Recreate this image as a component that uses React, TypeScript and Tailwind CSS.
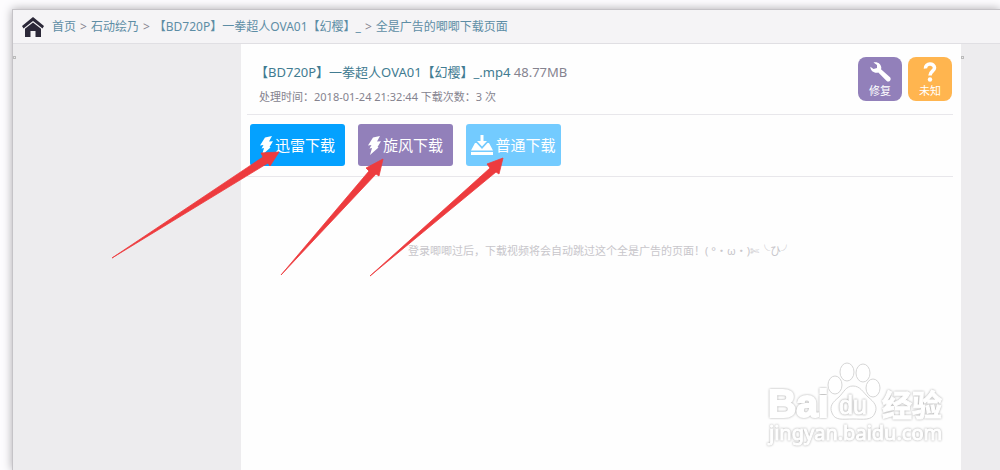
import React from "react";

const crumbs = ["首页", "石动绘乃", "【BD720P】一拳超人OVA01【幻樱】_", "全是广告的唧唧下载页面"];

function HomeIcon() {
  return (
    <svg viewBox="0 0 22 20" className="h-5 w-[22px]" fill="#2b2838" aria-hidden="true">
      <path d="M11 0 0 9l1.500 2.400L11 4l9.500 7.400L22 9z" />
      <path d="M11 5.500 3 11.700V20h5.500v-6h5v6H19v-8.300z" />
    </svg>
  );
}

function BoltIcon() {
  return (
    <svg viewBox="0 0 13 19" className="h-[19px] w-[13px]" fill="currentColor" aria-hidden="true">
      <path d="M5 1.500 12 0 9 5.500 13 5.200 9.500 11 10.500 11.500 2 19 4 12 1.500 12.500 3.500 9 0 9.500z" />
    </svg>
  );
}

function TrayIcon() {
  return (
    <svg viewBox="0 0 22 20" className="h-5 w-[22px]" fill="currentColor" aria-hidden="true">
      <path d="M9.500 0h3v6H16l-5 5.500L6 6h3.500z" />
      <path d="M4 8h1.500L11 14l5.500-6H18l4 7.500H0z" />
      <path d="M0 17h22v3H0z" />
    </svg>
  );
}

function WrenchIcon() {
  return (
    <svg viewBox="0 0 21 20" className="h-5 w-[21px]" fill="currentColor" aria-hidden="true">
      <path d="M3.500.5C7-.8 11 1.500 11.300 5.500c0 .7-.1 1.200-.3 1.800l9 8c2 2-.9 5.700-3.300 3.700L8.300 10.500C4.300 11.500.5 9 .3 4.700L3.500 7 7 6 7 3z" />
    </svg>
  );
}

function QuestionIcon() {
  return (
    <svg viewBox="0 0 14 20" className="h-5 w-3.5" aria-hidden="true">
      <path d="M2.500 6.500C2 .8 11.500.6 11.500 5.800c0 3.400-4.500 3.400-4.500 7.700" fill="none" stroke="currentColor" strokeWidth="3.600" />
      <circle cx="7" cy="17.500" r="2.200" fill="currentColor" />
    </svg>
  );
}

function Watermark() {
  return (
    <svg viewBox="0 0 180 90" className="absolute right-[54px] bottom-[20px] h-[90px] w-[180px] overflow-visible" fill="#fff" stroke="#fff" strokeWidth="1">
      <text x="2" y="57" strokeWidth="2" className="font-['Liberation_Sans',sans-serif] text-[39px] font-bold drop-shadow-[0_0_1px_#aaa]">Bai</text>
      <g stroke="#d6d6d6">
        <ellipse cx="69" cy="25" rx="7" ry="9" />
        <ellipse cx="81" cy="12" rx="7" ry="9" />
        <ellipse cx="97" cy="13" rx="7" ry="9" />
        <ellipse cx="107" cy="28" rx="7" ry="9" />
        <path d="M87 26c7 0 10 6 15 11 6 5 10 9 7 16-3 8-12 6-22 6s-18 2-21-6c-3-7 1-11 7-16 5-5 7-11 14-11z" />
      </g>
      <text x="73" y="54" className="font-['Liberation_Sans',sans-serif] text-[25px] drop-shadow-[0_0_1px_#999]">du</text>
      <text x="116" y="56" className="font-['Noto_Sans_CJK_SC',sans-serif] text-[30px] font-bold drop-shadow-[0_0_1px_#aaa]">经验</text>
      <text x="3" y="80" className="font-['Noto_Sans',sans-serif] text-[20px] drop-shadow-[0_0_1px_#aaa]">jingyan.baidu.com</text>
    </svg>
  );
}

function Arrows() {
  return (
    <svg viewBox="0 0 1000 470" className="pointer-events-none absolute top-0 left-0 h-[470px] w-[1000px]" fill="#ed3b3e" stroke="#ed3b3e" strokeWidth="0.800" aria-hidden="true">
      <path d="M112 258 263 157 261 153 279 152 270 166 268 163z" />
      <path d="M281 275 369 171 366 168 383 159 379 176 376 174z" />
      <path d="M370 276 490 168 487 164 503 158 499 174 496 172z" />
    </svg>
  );
}

const downloads = [
  { label: "迅雷下载", tone: "bg-[#04a1ff]", icon: <BoltIcon /> },
  { label: "旋风下载", tone: "bg-[#9280ba]", icon: <BoltIcon /> },
  { label: "普通下载", tone: "bg-[#73cbff]", icon: <TrayIcon /> },
];

export default function App() {
  return (
    <div className="relative flex min-h-screen flex-col overflow-hidden bg-[#fdfcfe] pt-[9px] pl-3 font-['Noto_Sans','Noto_Sans_CJK_SC',sans-serif] text-[#85838f]">
      <div className="flex grow flex-col border-t border-l border-[#c5c3c7] bg-[#edecee] shadow-[0_0_9px_#aaa8ad]">
        <header className="flex h-[34px] shrink-0 items-center gap-2 border-b border-[#e0dfe3] bg-[#f5f4f6] pl-[9px]">
          <a href="#home" aria-label="首页"><HomeIcon /></a>
          <nav className="flex items-center gap-1 text-[12px] whitespace-pre">
            {crumbs.map((c, i) => (
              <React.Fragment key={c}>
                {i > 0 && <span>&gt;</span>}
                <a href="#crumb" className="text-[#5d8da5]">{c}</a>
              </React.Fragment>
            ))}
          </nav>
        </header>
        <div className="flex grow">
          <div className="flex-[228] pt-3"><div className="size-[3px] border border-[#bbb]" /></div>
          <main className="w-[720px] shrink-0 bg-[#fefefe] pr-2 pl-[6px]">
            <section className="flex h-[71px] justify-between border-b border-[#e8e7eb] pt-[13px] pr-px pl-3">
              <div>
                <h1 className="-ml-1 text-[13px] leading-[30px]">
                  <a href="#file" className="text-[#417b91]">【BD720P】一拳超人OVA01【幻樱】_.mp4</a> 48.77MB
                </h1>
                <p className="text-[11px] leading-5">处理时间：2018-01-24 21:32:44 下载次数：3 次</p>
              </div>
              <div className="flex gap-[6px] text-[11px] leading-3 text-white">
                <button className="flex size-11 flex-col items-center gap-[3px] rounded-lg bg-[#9280ba] pt-[5px]"><WrenchIcon />修复</button>
                <button className="flex size-11 flex-col items-center gap-[3px] rounded-lg bg-[#ffb54f] pt-[5px]"><QuestionIcon />未知</button>
              </div>
            </section>
            <section className="flex h-[62px] gap-[13px] border-b border-[#e8e7eb] pt-[9px] pl-[3px]">
              {downloads.map((d) => (
                <button key={d.label} className={`flex h-[42px] w-[95px] items-center justify-center gap-[2px] rounded-[3px] text-[15px] text-white ${d.tone}`}>
                  {d.icon}{d.label}
                </button>
              ))}
            </section>
            <p className="pt-[66px] text-center text-[11px] leading-4 text-[#c8c6cb]">
              登录唧唧过后，下载视频将会自动跳过这个全是广告的页面！( °・ω・)✄╰ひ╯
            </p>
          </main>
          <div className="flex-[39] pt-3"><div className="size-[3px] border border-[#bbb]" /></div>
        </div>
      </div>
      <Watermark />
      <Arrows />
    </div>
  );
}
